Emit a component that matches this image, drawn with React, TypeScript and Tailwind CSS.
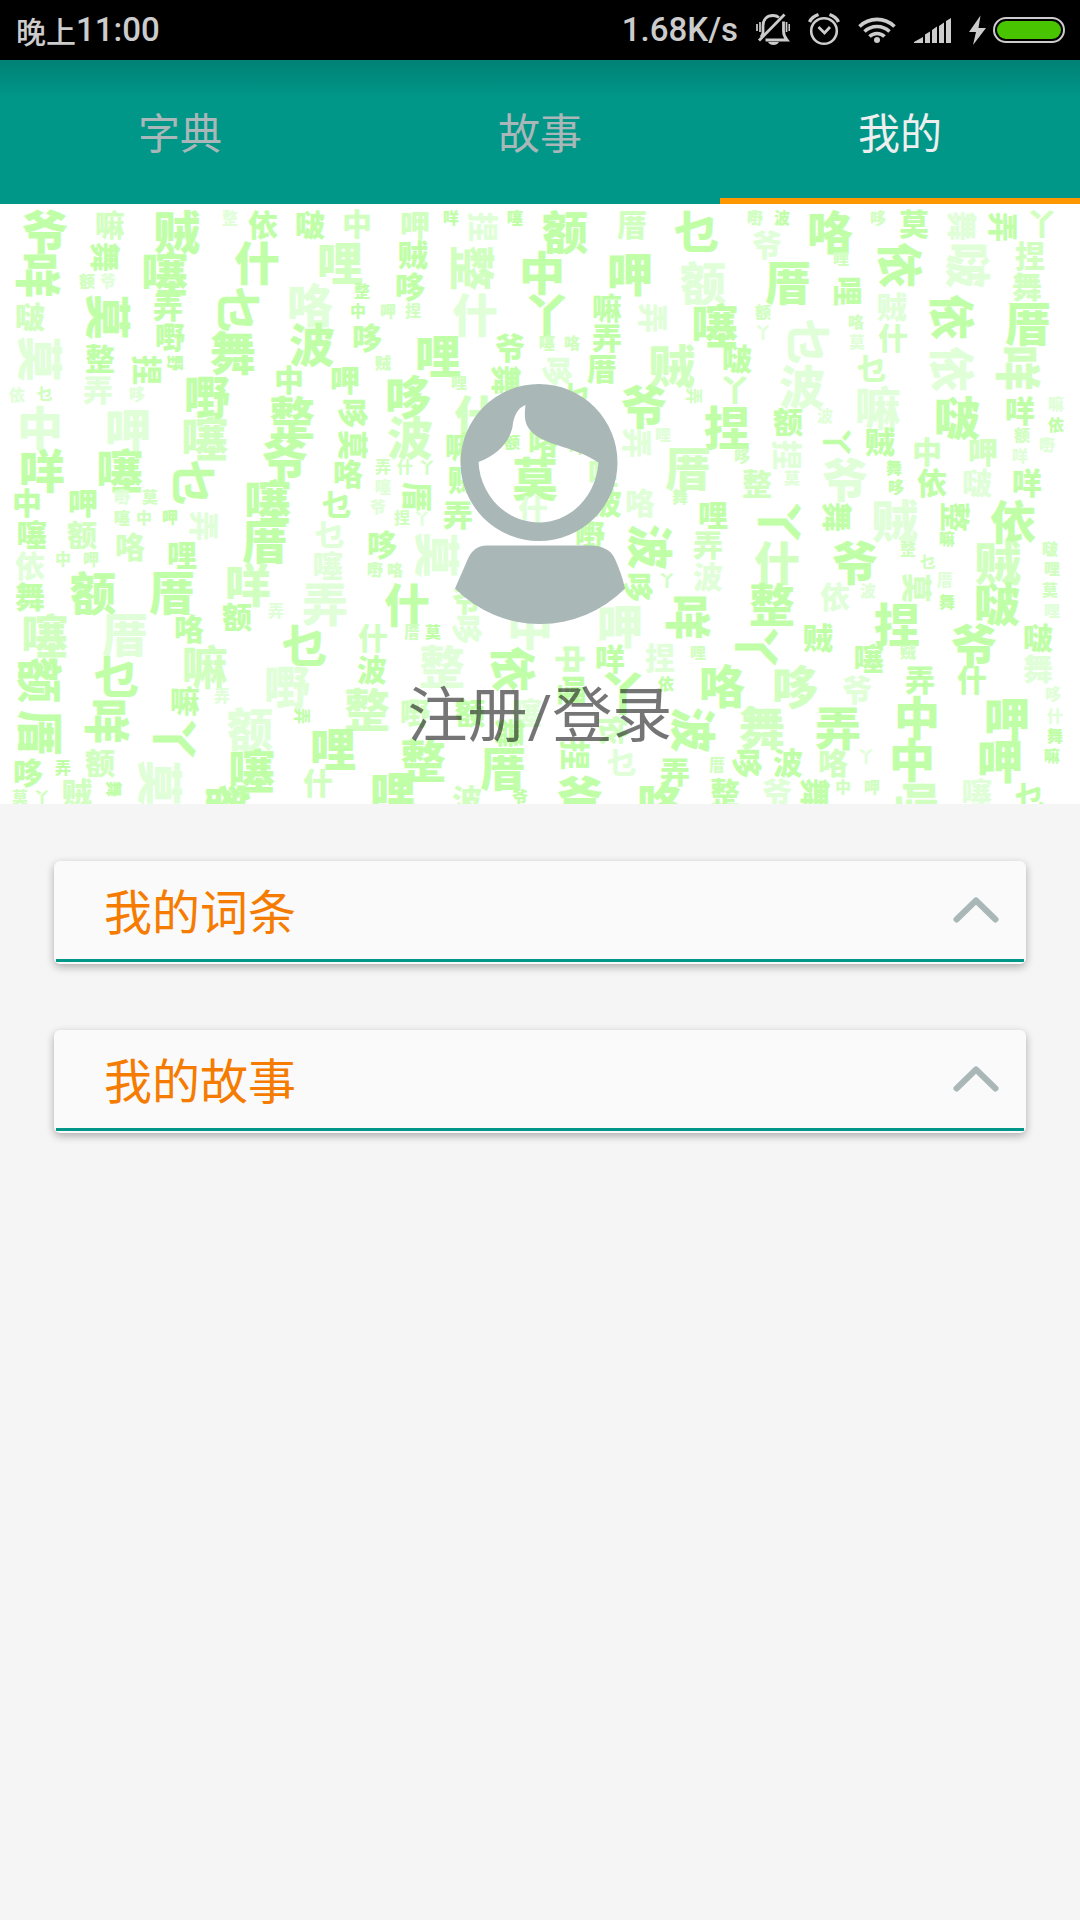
import React, { useState } from "react";

type Size = "L" | "M" | "S";
type Tone = "a" | "b" | "c";

// Word cloud entries: character, centre x, centre y, size, tone, optional "r" for a quarter turn.
const CLOUD = `
爷 45 28 L a|嘛 110 21 M b|贼 177 28 L a|整 230 14 S c|依 263 21 M a|啵 310 21 M a|中 357 20 M b|呷 415 21 M b
咩 38 71 L a r|舞 105 53 M a r|噻 165 70 L a|额 87 77 S b|爷 108 77 S c|什 257 59 L a|哩 340 59 L b
莫 108 113 L a r|弄 168 103 M a|乜 238 106 L a r|咯 310 101 L c|整 362 87 S a|中 358 107 S a|啵 30 113 M b
嘢 170 133 M a|舞 233 149 L a|波 312 141 L a|哆 367 134 M a|莫 40 155 L c r|整 100 155 M a|捏 147 166 M a r|野 175 159 S a r
中 289 176 M a|呷 345 176 M a|弄 98 186 M c|依 17 191 S c|乜 45 190 S b|哆 137 190 S c|嘢 207 193 L a|整 292 214 L a
哆 353 209 M a r|中 40 224 L c|呷 128 226 L c|噻 205 235 L b|莫 353 241 M a r|爷 285 256 L a|咩 42 267 L a|噻 120 267 L a
乜 193 279 L a r|咯 348 270 M a|中 27 299 M a|呷 83 299 M a|嘢 122 293 S c|莫 150 293 S b|噻 268 298 L a|乜 337 301 M a
噻 122 314 S b|中 144 314 S b|呷 170 313 S a|弄 204 322 M c r|厝 265 338 L a|乜 330 331 M c|哆 382 341 M a
噻 32 331 M a|额 82 331 M b|咯 130 343 M b|哩 182 351 M a|依 30 362 M c|中 63 355 S b|呷 91 355 S b|噻 328 362 M c
舞 30 393 M a|额 93 389 L a|厝 172 389 L a|咩 248 381 L b|弄 325 400 L c|额 237 413 M a|弄 276 407 S c
噻 45 432 L b|厝 125 431 L c|咯 189 425 M a|乜 305 442 L a|什 373 434 M b|额 40 476 L a r|乜 117 473 L a|嘛 205 463 L b
嘢 287 483 L c|波 372 466 M a|嘛 185 497 M a|弄 222 492 S c|整 367 506 L b|厝 40 529 L a r|咩 107 517 L a r|丫 175 535 L a r
额 250 525 L c|弄 302 512 S a r|哩 333 545 L a|哆 28 569 M a|弄 63 564 S a|额 100 559 M b|莫 160 579 L c r|噻 252 567 L a
什 318 579 M b|莫 20 593 S b|丫 42 593 S b|贼 77 589 M b|舞 114 585 S a r|额 228 603 L a r|哩 393 589 L a
咩 451 14 S a|捏 483 23 M c r|噻 515 14 S a|额 565 28 L a|厝 632 21 M b|乜 697 28 L a|贼 413 51 M a|整 472 64 L b r
中 542 69 L a|呷 630 70 L a|额 703 79 L c|哆 410 83 M a|呷 388 107 S b|捏 413 107 S b|什 475 111 L c|丫 547 111 L a
嘛 607 104 M a|弄 653 114 M c r|噻 715 122 L a|弄 607 134 M a|哩 438 152 L a|爷 510 144 M a|噻 547 139 S b|咯 572 139 S b
贼 383 159 S b|哆 557 167 M c r|厝 602 165 M a|贼 672 162 L b|啵 737 155 M a|舞 506 176 M a r|哩 459 179 S b|哆 408 193 L a
什 477 213 L b|乜 577 193 M a|爷 644 203 L a|弄 694 192 S b r|丫 735 186 M b|波 410 234 L b|捏 727 224 L a|额 512 238 S a
咯 543 239 M a|咩 577 243 S a|弄 637 239 M c r|哩 663 231 S c|嘛 460 243 M a|弄 383 263 S b|什 405 263 S b|丫 427 263 S b
贼 463 276 M a|莫 535 275 L a|哩 603 269 M b|厝 688 265 L b|噻 383 283 S c|厝 417 293 M a r|咯 640 299 M c|波 607 299 M a|舞 680 293 S b
爷 378 303 S c|捏 402 314 S b|丫 422 314 S c|弄 458 311 M a|什 533 306 M c|哩 713 311 M a|莫 437 351 L c r|嘢 590 331 M a
波 650 343 L a r|弄 708 341 M b|嘢 375 366 S b|咯 395 366 S b|什 407 401 L a|波 708 373 M c|哆 638 383 M a r|丫 667 376 S b
咩 688 413 L a r|厝 412 428 S b|莫 433 428 S a|哆 467 425 M c r|中 530 424 L c|呷 620 422 L c|爷 467 396 M b|整 442 463 L c
依 513 465 L a r|中 570 455 M b r|咩 610 455 M a|捏 660 454 M c|哩 698 449 S b|丫 623 489 L a|哩 572 486 M a r|依 666 480 S a
咯 722 482 L a|嘢 415 509 M b|额 470 509 M a|噻 527 509 M c|波 693 526 L a r|依 613 526 M b r|舞 510 529 M a r|整 423 557 L a
厝 503 565 L a|捏 575 551 M a r|乜 622 559 M c|弄 675 568 M a|厝 717 561 S b|波 467 596 M b|爷 520 593 S a|爷 580 594 L a
咯 660 600 L a|整 725 589 M a|嘢 755 14 S b|波 782 14 S a|咯 830 28 L a|哆 878 14 S b|莫 914 20 M a|舞 962 22 M c r
弄 1003 23 M a r|丫 1042 20 M b|爷 767 41 M c|哩 841 55 S b|依 900 61 L a r|啵 968 61 L c r|捏 1030 52 M b|厝 788 79 L a
哩 848 87 M a r|舞 1027 83 M b|贼 892 103 M c|依 952 113 L a r|厝 1028 120 L a|额 763 108 S b|丫 763 128 S c|乜 808 138 L c r
咯 856 118 S b|什 893 134 M b|莫 857 138 S c|乜 872 165 M b|依 952 165 L c r|咩 1018 164 L b r|波 802 183 L c|嘛 878 204 L c
啵 957 214 L a|咩 1020 207 M a|嘛 1056 200 S c|依 1056 221 S a|额 788 218 M a|波 825 212 S c|丫 837 238 M a r|贼 880 238 M a
捏 787 251 M c r|哆 742 252 S b|中 927 248 M b|呷 983 248 M b|额 1022 231 S b|嘢 1047 241 S c|咩 1020 252 S c|爷 845 276 L c
舞 894 264 S a|哆 896 283 S a|依 932 279 M a|啵 977 279 M c|咩 1027 279 M a|整 757 280 M b|莫 792 274 S c|丫 780 318 L a r
舞 837 313 M a r|贼 895 317 L c|整 955 313 M a r|依 1013 318 L a|嘛 947 335 S a|什 777 359 L b|爷 855 359 L a|整 908 345 S b
乜 928 358 S b|贼 998 359 L b|啵 1050 345 S b|哩 1052 365 S b|莫 1050 386 S b|哩 1052 407 S c|整 772 401 L a|依 835 393 M c
波 868 387 S c|莫 917 384 M b r|厝 945 376 S c|舞 947 398 S a|啵 997 400 L a|捏 897 421 L a|丫 757 443 L a r|贼 818 434 M a
爷 974 442 L a|啵 1038 434 M a|噻 869 455 M a|贼 908 448 S b|弄 920 476 M a|什 972 476 M a|舞 1038 465 M c|哆 1053 490 S c
哆 795 483 L b|爷 857 486 M c|舞 762 524 L b|弄 838 524 L a|中 917 514 L a|呷 1007 515 L a|什 1055 512 S c|舞 1055 532 S a
哆 747 559 M a r|波 788 559 M a|咯 833 559 M b|丫 866 552 S c|中 912 556 L a|呷 1000 557 L a|嘛 1052 552 S a|爷 777 589 M c
舞 815 589 M a r|中 843 583 S b|呷 872 583 S b|哩 917 600 L b r|噻 977 589 M c|乜 1030 593 M a`;

const SIZES: Record<Size, number> = { L: 46, M: 30, S: 16 };
const TONES: Record<Tone, string> = { a: "#c0ffa8", b: "#d0ffc0", c: "#e0ffd8" };

const words = CLOUD.trim()
  .split(/[|\n]/)
  .map((entry) => {
    const [char, x, y, size, tone, turn] = entry.split(" ");
    return { char, x: Number(x), y: Number(y), size: SIZES[size as Size], fill: TONES[tone as Tone], turned: turn === "r" };
  });

function WordCloud() {
  return (
    <svg
      aria-hidden="true"
      className="absolute inset-0 h-full w-full"
      viewBox="0 0 1080 600"
      preserveAspectRatio="xMidYMid slice"
      textAnchor="middle"
      fontWeight="900"
    >
      {words.map((w, i) => (
        <text
          key={i}
          x={w.x}
          y={w.y}
          dy="0.37em"
          fontSize={w.size}
          fill={w.fill}
          transform={w.turned ? `rotate(90 ${w.x} ${w.y})` : undefined}
        >
          {w.char}
        </text>
      ))}
    </svg>
  );
}

function StatusBar() {
  return (
    <header className="flex h-[60px] items-center justify-between bg-black pr-[15px] pl-4 font-medium text-[#cccccc]">
      <div className="flex items-center">
        <span className="text-[30px] leading-[56px]">晚上</span>
        <span className="font-['Roboto'] text-[33px] leading-[60px]">11:00</span>
      </div>
      <div className="flex items-center gap-[18px]">
        <span className="font-['Roboto'] text-[33px] leading-[60px]">1.68K/s</span>
        <svg className="h-[60px] w-[34px]" viewBox="0 0 34 60" fill="none" stroke="currentColor" strokeWidth="2.8">
          <path d="M7 34V26C7 19 11 15.500 17 15.500c2.500 0 4.500.8 6 2" />
          <path d="M3 40.500 28.500 14.500" />
          <path d="M9.500 40H31C28.500 37 27.500 35 27.500 31V21.500" />
          <path d="M7.500 33 5 37" />
          <path d="M12 42h11c-1 2-3 3-5.500 3s-4.500-1-5.500-3z" fill="currentColor" stroke="none" />
          <path d="M1 24v7M4 22v10M30.500 22v10M33.300 24v7" strokeWidth="1.700" />
        </svg>
        <svg className="h-[60px] w-8" viewBox="0 0 32 60" fill="none" stroke="currentColor" strokeWidth="2.600">
          <circle cx="16" cy="31" r="12.800" />
          <path d="M1.500 22C3 18.500 6 16 10.500 14.500M30.500 22C29 18.500 26 16 21.500 14.500" strokeWidth="3.400" />
          <path d="M10.500 27 16.500 33 22 27" strokeWidth="2.800" />
        </svg>
        <svg className="h-[60px] w-[38px]" viewBox="0 0 38 60" fill="none" stroke="currentColor" strokeWidth="3.600">
          <path d="M1.500 26.500a25 25 0 0 1 35 0" />
          <path d="M6.500 31.500a18 18 0 0 1 25 0" />
          <path d="M11.500 36.500a10.700 10.700 0 0 1 15 0" />
          <circle cx="19" cy="40" r="3" fill="currentColor" stroke="none" />
        </svg>
        <svg className="h-[60px] w-[37px]" viewBox="0 0 37 60" fill="currentColor">
          <path d="M0 43v-1l9-5v6zM11 43V34.500l5-3V43zM18 43V30l5-3.500V43zM25 43V26l5-3.500V43zM32 43V21l5-3V43z" />
        </svg>
        <div className="flex items-center gap-[7px]">
          <svg className="h-[60px] w-[17px]" viewBox="0 0 17 60" fill="currentColor">
            <path d="M11.500 15.500 0 32h7L4 45 17 28H9.500z" />
          </svg>
          <div className="h-[26px] w-[72px] rounded-full border-2 border-[#cccccc] p-[2px]">
            <div className="h-full w-full rounded-full bg-[#48c400]" />
          </div>
        </div>
      </div>
    </header>
  );
}

const TABS = ["字典", "故事", "我的"];

function TabBar() {
  const [active, setActive] = useState(2);
  return (
    <nav className="grid h-36 grid-cols-3 bg-linear-to-b from-[#008175] to-[#009688] to-[36px]">
      {TABS.map((tab, i) => (
        <button
          key={tab}
          type="button"
          aria-current={i === active ? "page" : undefined}
          onClick={() => setActive(i)}
          className={
            i === active
              ? "border-t-4 border-b-[6px] border-t-transparent border-b-[#ff9800] text-[42px] leading-[60px] text-[#eeeeee]"
              : "border-t-4 border-b-[6px] border-transparent text-[42px] leading-[60px] text-[#aab7b8]"
          }
        >
          {tab}
        </button>
      ))}
    </nav>
  );
}

function Avatar() {
  return (
    <svg aria-hidden="true" className="h-[240px] w-[170px]" viewBox="0 0 170 240" fill="#a9b7b7">
      <path
        fillRule="evenodd"
        d="M84 0a78.500 78.500 0 1 1 0 157a78.500 78.500 0 1 1 0-157zM23.500 78C42 71 54 59 57.500 43C58.500 33 62 24 70.500 21C69 34 70 40 75 46C81 53 91 58 108 63C121 67 134 72 143.500 78.500C141 113 115 138.500 84 138.500C50 138.500 25 110 23.500 78z"
      />
      <path d="M0 204.500 12 177C16 167 22 161.500 32 161.500H134C148 161.500 156 166 160 175C164 184 168 195 170 204.500A119.500 119.500 0 0 1 0 204.500z" />
    </svg>
  );
}

function Section({ title }: { title: string }) {
  return (
    <button
      type="button"
      className="flex w-full flex-col rounded-[6px] bg-[#fafafa] px-[2px] pb-[2px] shadow-[0_3px_8px_rgba(0,0,0,0.3)]"
    >
      <span className="flex w-full items-center justify-between border-b-[3px] border-[#009688] pr-[25px] pl-[48px]">
        <span className="pb-[2px] text-[48px] leading-[96px] text-[#f57c00]">{title}</span>
        <svg
          aria-hidden="true"
          className="h-[26px] w-[46px]"
          viewBox="0 0 46 26"
          fill="none"
          stroke="#a9b7b7"
          strokeWidth="6"
          strokeLinecap="round"
          strokeLinejoin="round"
        >
          <path d="M3.500 22.500 23 3.500 42.500 22.500" />
        </svg>
      </span>
    </button>
  );
}

export default function App() {
  return (
    <div className="min-h-screen bg-[#f5f5f5] font-['Noto_Sans_CJK_SC',sans-serif]">
      <StatusBar />
      <TabBar />
      <main>
        <section className="relative overflow-hidden bg-white">
          <WordCloud />
          <button type="button" className="relative flex w-full flex-col items-center pt-[180px] pb-[47px]">
            <Avatar />
            <span className="mt-[53px] font-['Roboto','Noto_Sans_CJK_SC',sans-serif] text-[60px] leading-[80px] text-black/54">
              注册/登录
            </span>
          </button>
        </section>
        <div className="flex flex-col gap-[66px] px-[54px] pt-[57px]">
          <Section title="我的词条" />
          <Section title="我的故事" />
        </div>
      </main>
    </div>
  );
}
